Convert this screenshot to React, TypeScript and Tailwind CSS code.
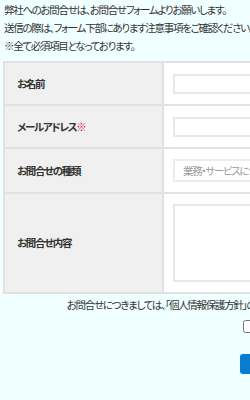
const rows = [
  { label: "お名前", required: false, kind: "input", h: "h-[43px]" },
  { label: "メールアドレス", required: true, kind: "input", h: "h-[43px]" },
  { label: "お問合せの種類", required: false, kind: "select", h: "h-[45px]" },
  { label: "お問合せ内容", required: false, kind: "textarea", h: "h-[100px]" },
];

const App = () => {
  return (
    <div
      className="w-[572px] min-h-[400px] bg-[#f0ffff] text-[#333] text-[10.5px] leading-[18px] [font-feature-settings:'palt'] tracking-[-1.3px]"
      style={{ fontFamily: '"Noto Sans CJK JP", "Noto Sans", sans-serif' }}
    >
      <div className="pl-[4px] pt-[1px]">
        <p>弊社へのお問合せは、お問合せフォームよりお願いします。</p>
        <p>送信の際は、フォーム下部にあります注意事項をご確認ください。</p>
        <p>※全て必須項目となっております。</p>
      </div>

      <table className="ml-[3px] mt-[6px] w-[566px] border-collapse">
        <tbody>
          {rows.map((row, i) => (
            <tr key={i} className={row.h}>
              <th className="w-[159px] bg-[#f0f0f0] border-2 border-[#e2e2e2] px-[12px] text-left font-bold">
                {row.label}
                {row.required && <span className="text-[#e60033]">※</span>}
              </th>
              <td className="bg-white border-2 border-[#e2e2e2] pl-[9px] pr-[10px] py-[10px]">
                {row.kind === "input" && (
                  <input type="text" className="block w-full h-[20px] border-2 border-[#e8e8e8] bg-white" />
                )}
                {row.kind === "select" && (
                  <div className="h-[23px] border-2 border-[#ececec] bg-white pl-[8px] text-[#999] leading-[19px]">
                    業務・サービスについて
                  </div>
                )}
                {row.kind === "textarea" && (
                  <textarea className="block w-full h-[78px] border-2 border-[#e8e8e8] bg-white resize-none" />
                )}
              </td>
            </tr>
          ))}
        </tbody>
      </table>

      <p className="mt-[2px] text-center">
        お問合せにつきましては、「個人情報保護方針」の内容をご確認いただき、同意いただける場合に送信してください。
      </p>

      <label className="mt-[3px] flex items-center justify-center gap-[4px]">
        <input type="checkbox" className="w-[13px] h-[13px]" />
        <span>上記に同意します</span>
      </label>

      <div className="mt-[19px] flex justify-center">
        <button className="h-[20px] w-[92px] rounded-[3px] bg-[#0a7cd0] text-white text-[11px] leading-[20px]">
          確認画面へ
        </button>
      </div>
    </div>
  );
};

export default App;
